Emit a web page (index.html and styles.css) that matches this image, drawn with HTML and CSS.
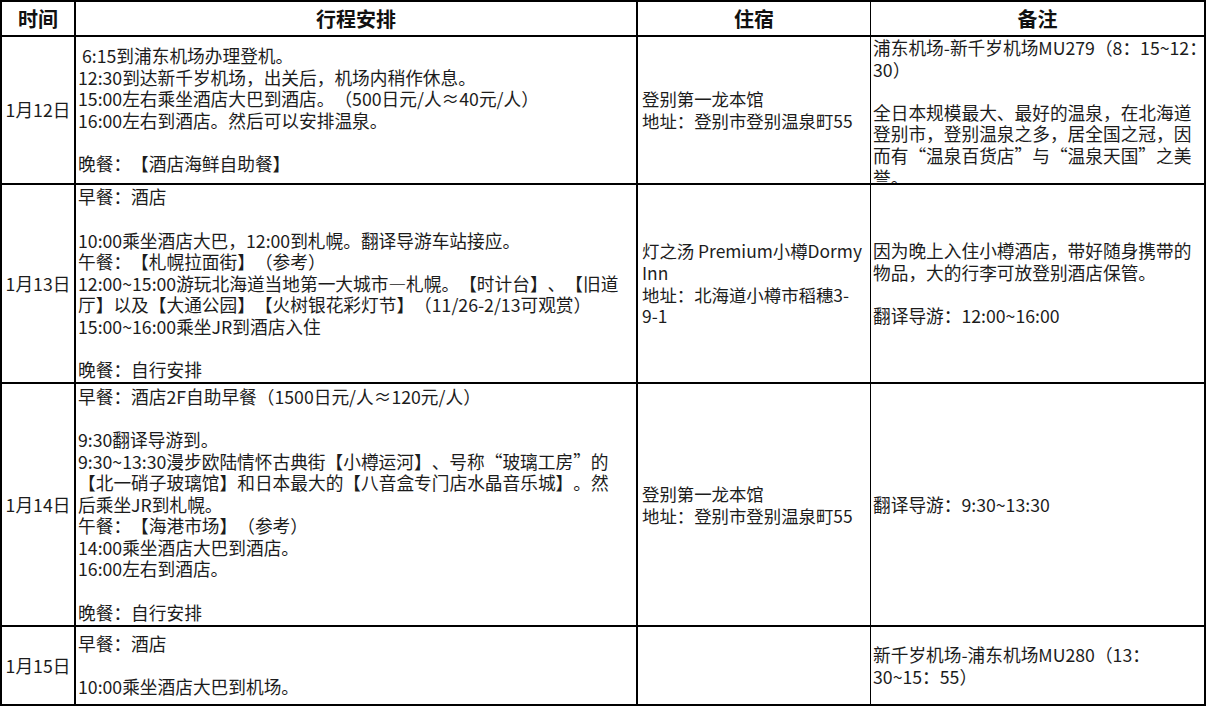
FILE: index.html
```html
<!DOCTYPE html>
<html lang="zh-CN">
<head>
<meta charset="utf-8">
<title>行程安排</title>
<link rel="stylesheet" href="styles.css">
</head>
<body>
<div class="sheet">
  <div class="cell head">时间</div>
  <div class="cell head">行程安排</div>
  <div class="cell head">住宿</div>
  <div class="cell head head-last">备注</div>

  <div class="cell date">1月12日</div>
  <div class="cell plan">&nbsp;6:15到浦东机场办理登机。<br>12:30到达新千岁机场，出关后，机场内稍作休息。<br>15:00左右乘坐酒店大巴到酒店。（500日元/人≈40元/人）<br>16:00左右到酒店。然后可以安排温泉。<br><br>晚餐：【酒店海鲜自助餐】</div>
  <div class="cell hotel">登别第一龙本馆<br>地址：登别市登别温泉町55</div>
  <div class="cell note note-top">浦东机场-新千岁机场MU279（8：15~12：<br>30）<br><br>全日本规模最大、最好的温泉，在北海道<br>登别市，登别温泉之多，居全国之冠，因<br>而有“温泉百货店”与“温泉天国”之美<br>誉。</div>

  <div class="cell date">1月13日</div>
  <div class="cell plan">早餐：酒店<br><br>10:00乘坐酒店大巴，12:00到札幌。翻译导游车站接应。<br>午餐：【札幌拉面街】（参考）<br>12:00~15:00游玩北海道当地第一大城市—札幌。【时计台】、【旧道<br>厅】以及【大通公园】【火树银花彩灯节】（11/26-2/13可观赏）<br>15:00~16:00乘坐JR到酒店入住<br><br>晚餐：自行安排</div>
  <div class="cell hotel">灯之汤 Premium小樽Dormy<br>Inn<br>地址：北海道小樽市稻穗3-<br>9-1</div>
  <div class="cell note">因为晚上入住小樽酒店，带好随身携带的<br>物品，大的行李可放登别酒店保管。<br><br>翻译导游：12:00~16:00</div>

  <div class="cell date">1月14日</div>
  <div class="cell plan">早餐：酒店2F自助早餐（1500日元/人≈120元/人）<br><br>9:30翻译导游到。<br>9:30~13:30漫步欧陆情怀古典街【小樽运河】、号称“玻璃工房”的<br>【北一硝子玻璃馆】和日本最大的【八音盒专门店水晶音乐城】。然<br>后乘坐JR到札幌。<br>午餐：【海港市场】（参考）<br>14:00乘坐酒店大巴到酒店。<br>16:00左右到酒店。<br><br>晚餐：自行安排</div>
  <div class="cell hotel">登别第一龙本馆<br>地址：登别市登别温泉町55</div>
  <div class="cell note">翻译导游：9:30~13:30</div>

  <div class="cell date">1月15日</div>
  <div class="cell plan">早餐：酒店<br><br>10:00乘坐酒店大巴到机场。</div>
  <div class="cell hotel"></div>
  <div class="cell note">新千岁机场-浦东机场MU280（13：<br>30~15：55）</div>
</div>
</body>
</html>
```

FILE: styles.css
```css
* {
  box-sizing: border-box;
}

html, body {
  margin: 0;
  padding: 0;
  background: #ffffff;
}

body {
  font-family: "Noto Sans CJK SC", "Noto Sans", sans-serif;
  color: #1c1c1c;
  text-spacing-trim: space-all;
  font-feature-settings: "halt" 0, "palt" 0;
}

.sheet {
  display: grid;
  grid-template-columns: 74px 562px 233px 335px;
  grid-template-rows: 35px 148px 199px 243px 79px;
  border-left: 2px solid #000;
  border-top: 2px solid #000;
  width: 1206px;
}

.cell {
  border-right: 2px solid #000;
  border-bottom: 2px solid #000;
  overflow: hidden;
  display: flex;
  flex-direction: column;
  justify-content: center;
  font-size: 17.7px;
  line-height: 21.6px;
  white-space: nowrap;
}

.head {
  align-items: center;
  font-weight: 700;
  font-size: 20px;
  line-height: 24px;
  color: #111;
}

.date {
  align-items: center;
  text-align: center;
}

.plan {
  padding-left: 2px;
}

.hotel {
  padding-left: 4px;
  border-right-width: 1px;
  font-size: 17.4px;
}

.head:nth-child(3) {
  border-right-width: 1px;
}

.note {
  padding-left: 2px;
}

.note-top {
  justify-content: flex-start;
}
```
